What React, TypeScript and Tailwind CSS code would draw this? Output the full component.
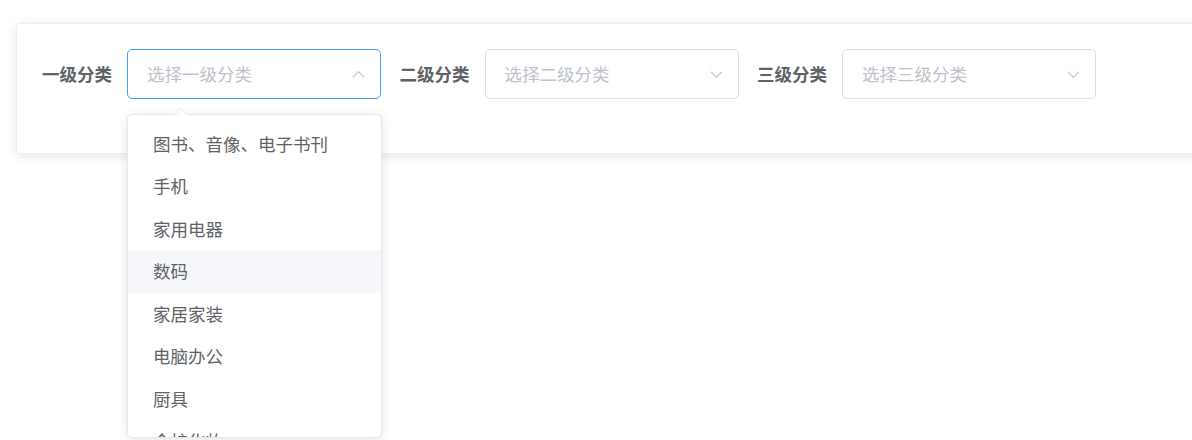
import React from "react";

const OPTIONS = [
  "图书、音像、电子书刊",
  "手机",
  "家用电器",
  "数码",
  "家居家装",
  "电脑办公",
  "厨具",
  "个护化妆",
];

const Chevron = ({ up }: { up?: boolean }) => (
  <svg width="15" height="15" viewBox="0 0 16 16" fill="none" stroke="#c0c4cc" strokeWidth="1.3">
    {up ? <path d="M2 11 L8 5 L14 11" /> : <path d="M2 5 L8 11 L14 5" />}
  </svg>
);

const CategorySelect = ({ label, placeholder, open }: { label: string; placeholder: string; open?: boolean }) => (
  <div className="flex items-center mr-[12.5px]">
    <label className="pr-[15px] pl-[6px] text-[17.5px] font-bold text-[#606266] leading-[50px]">
      {label}
    </label>
    <div
      className={`relative w-[254px] h-[50px] rounded-[5px] border bg-white flex items-center pl-[19px] pr-[14px] ${
        open ? "border-[#409eff]" : "border-[#dcdfe6]"
      }`}
    >
      <span className="flex-1 text-[17.5px] text-[#c0c4cc]">{placeholder}</span>
      <Chevron up={open} />
    </div>
  </div>
);

export default function App() {
  return (
    <div
      className="relative h-[440px] w-[1192px] overflow-hidden bg-white"
      style={{ fontFamily: '"Microsoft YaHei", "Noto Sans CJK SC", sans-serif' }}
    >
      {/* Filter card */}
      <div className="ml-4 mt-[23px] w-[1200px] h-[131px] rounded-[5px] border border-[#ebeef5] bg-white shadow-[0_2px_12px_rgba(0,0,0,0.1)] pt-[25px] pl-[19px]">
        <div className="flex items-center">
          <CategorySelect label="一级分类" placeholder="选择一级分类" open />
          <CategorySelect label="二级分类" placeholder="选择二级分类" />
          <CategorySelect label="三级分类" placeholder="选择三级分类" />
        </div>
      </div>

      {/* Dropdown */}
      <div className="absolute left-[127px] top-[114px] w-[255px] h-[324px] rounded-[5px] border border-[#e4e7ed] bg-white shadow-[0_2px_12px_rgba(0,0,0,0.1)]">
        <div className="absolute -top-[7px] left-[46px] w-0 h-0 border-x-[7px] border-x-transparent border-b-[7px] border-b-[#e4e7ed]" />
        <div className="absolute -top-[6px] left-[47px] w-0 h-0 border-x-[6px] border-x-transparent border-b-[6px] border-b-white" />
        <div className="h-full overflow-hidden rounded-[5px] py-[7.5px]">
          {OPTIONS.map((opt) => (
            <div
              key={opt}
              className={`h-[42.5px] leading-[42.5px] px-[25px] text-[17.5px] text-[#606266] ${
                opt === "数码" ? "bg-[#f5f7fa]" : ""
              }`}
            >
              {opt}
            </div>
          ))}
        </div>
      </div>
    </div>
  );
}
